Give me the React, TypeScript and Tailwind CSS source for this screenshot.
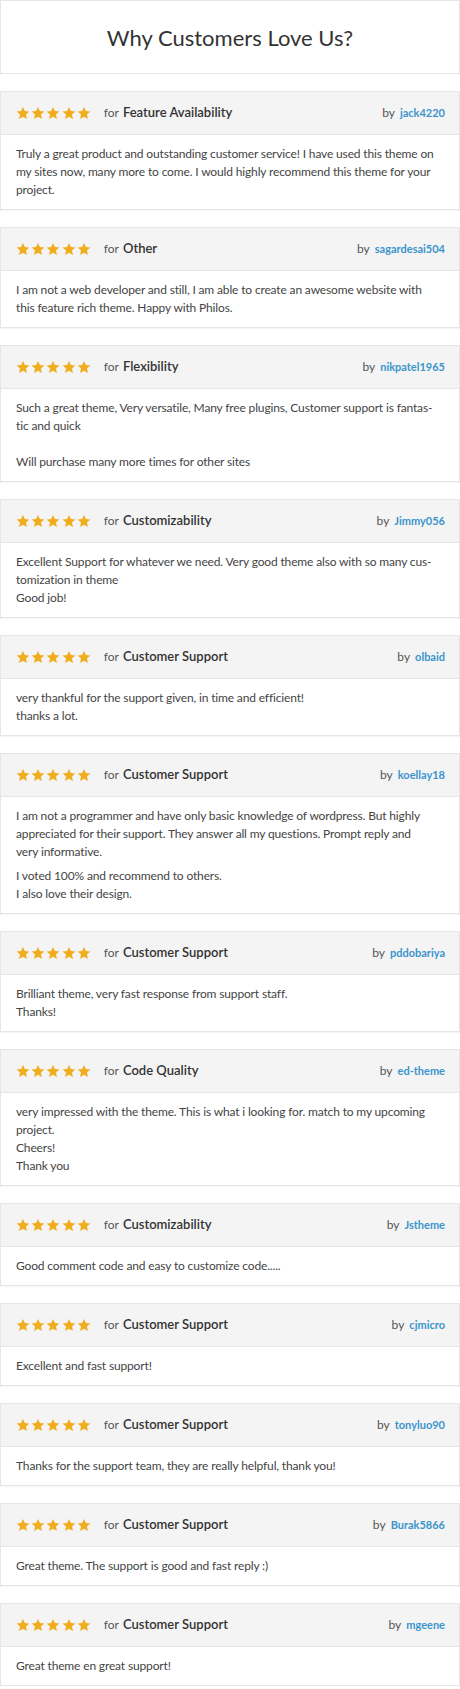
import React from 'react';

type Review = {
    category: string;
    author: string;
    paragraphs: string[];
};

// line breaks follow the original layout of each testimonial
const reviews: Review[] = [
    {
        category: 'Feature Availability',
        author: 'jack4220',
        paragraphs: [
            'Truly a great product and outstanding customer service! I have used this theme on\nmy sites now, many more to come. I would highly recommend this theme for your\nproject.',
        ],
    },
    {
        category: 'Other',
        author: 'sagardesai504',
        paragraphs: [
            'I am not a web developer and still, I am able to create an awesome website with\nthis feature rich theme. Happy with Philos.',
        ],
    },
    {
        category: 'Flexibility',
        author: 'nikpatel1965',
        paragraphs: [
            'Such a great theme, Very versatile, Many free plugins, Customer support is fantas-\ntic and quick\n\nWill purchase many more times for other sites',
        ],
    },
    {
        category: 'Customizability',
        author: 'Jimmy056',
        paragraphs: [
            'Excellent Support for whatever we need. Very good theme also with so many cus-\ntomization in theme\nGood job!',
        ],
    },
    {
        category: 'Customer Support',
        author: 'olbaid',
        paragraphs: ['very thankful for the support given, in time and efficient!\nthanks a lot.'],
    },
    {
        category: 'Customer Support',
        author: 'koellay18',
        paragraphs: [
            'I am not a programmer and have only basic knowledge of wordpress. But highly\nappreciated for their support. They answer all my questions. Prompt reply and\nvery informative.',
            'I voted 100% and recommend to others.\nI also love their design.',
        ],
    },
    {
        category: 'Customer Support',
        author: 'pddobariya',
        paragraphs: ['Brilliant theme, very fast response from support staff.\nThanks!'],
    },
    {
        category: 'Code Quality',
        author: 'ed-theme',
        paragraphs: [
            'very impressed with the theme. This is what i looking for. match to my upcoming\nproject.\nCheers!\nThank you',
        ],
    },
    {
        category: 'Customizability',
        author: 'Jstheme',
        paragraphs: ['Good comment code and easy to customize code.....'],
    },
    {
        category: 'Customer Support',
        author: 'cjmicro',
        paragraphs: ['Excellent and fast support!'],
    },
    {
        category: 'Customer Support',
        author: 'tonyluo90',
        paragraphs: ['Thanks for the support team, they are really helpful, thank you!'],
    },
    {
        category: 'Customer Support',
        author: 'Burak5866',
        paragraphs: ['Great theme. The support is good and fast reply :)'],
    },
    {
        category: 'Customer Support',
        author: 'mgeene',
        paragraphs: ['Great theme en great support!'],
    },
];

function Star() {
    return (
        <svg viewBox="0 0 24 24" className="w-[14px] h-[14px]" fill="#f0ae1f">
            <path d="M12 1.6l3.2 7.1 7.7.8-5.8 5.2 1.7 7.6L12 18.4l-6.8 3.9 1.7-7.6-5.8-5.2 7.7-.8z" />
        </svg>
    );
}

function ReviewCard({ review }: { review: Review }) {
    return (
        <div className="bg-white border border-[#e6e6e6] shadow-[0_1px_1px_rgba(0,0,0,0.04)]">
            {/* Rating header */}
            <div className="h-[43px] bg-[#f4f4f4] border-b border-[#e6e6e6] flex items-center justify-between pl-[15px] pr-[14px]">
                <div className="flex items-center">
                    <div className="flex items-center gap-[1.2px]">
                        {[0, 1, 2, 3, 4].map((i) => (
                            <Star key={i} />
                        ))}
                    </div>
                    <span className="ml-[13px] text-[12px] text-[#555]">for</span>
                    <span className="ml-[4px] text-[13px] font-semibold text-[#333]">{review.category}</span>
                </div>
                <div className="flex items-center">
                    <span className="text-[12px] text-[#555]">by</span>
                    <span className="ml-[5px] text-[11px] font-bold text-[#3b94cc]">{review.author}</span>
                </div>
            </div>

            {/* Review body */}
            <div className="px-[15px] py-[10px] text-[12px] tracking-[-0.15px] leading-[18px] text-[#444] flex flex-col gap-[6px]">
                {review.paragraphs.map((p, i) => (
                    <p key={i} className="whitespace-pre-line">
                        {p}
                    </p>
                ))}
            </div>
        </div>
    );
}

export default function App() {
    return (
        <div className="w-[460px] bg-white flex flex-col gap-[17px] font-['Lato',sans-serif]">
            <div className="h-[74px] border border-[#e6e6e6] flex items-center justify-center">
                <h1 className="text-[22px] text-[#333] font-normal">Why Customers Love Us?</h1>
            </div>
            {reviews.map((r, i) => (
                <ReviewCard key={i} review={r} />
            ))}
        </div>
    );
}
